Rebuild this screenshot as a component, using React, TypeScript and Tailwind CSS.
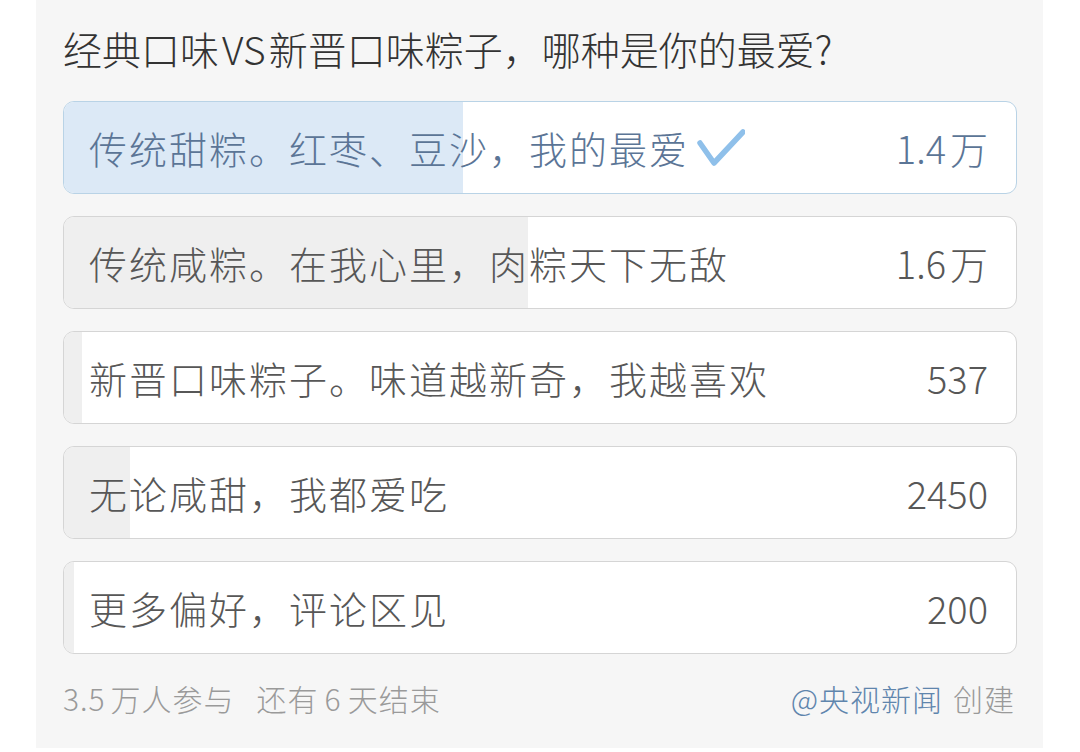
import React from 'react';

interface PollOption {
    label: string;
    count: string;
    share: number;
    picked?: boolean;
}

const options: PollOption[] = [
    { label: '传统甜粽。红枣、豆沙，我的最爱', count: '1.4万', share: 41.9, picked: true },
    { label: '传统咸粽。在我心里，肉粽天下无敌', count: '1.6万', share: 48.7 },
    { label: '新晋口味粽子。味道越新奇，我越喜欢', count: '537', share: 1.9 },
    { label: '无论咸甜，我都爱吃', count: '2450', share: 6.9 },
    { label: '更多偏好，评论区见', count: '200', share: 1.0 },
];

const font = { fontFamily: '"Noto Sans CJK SC", "Noto Sans", sans-serif' };

function CheckMark() {
    return (
        <svg className="ml-[8px] w-[48px] h-[38px] shrink-0" viewBox="0 0 48 38" fill="none">
            <path
                d="M3 14 L17 34 L46 3"
                stroke="#8fc0ea"
                strokeWidth="5.5"
                strokeLinecap="round"
                strokeLinejoin="round"
            />
        </svg>
    );
}

function OptionRow({ option }: { option: PollOption }) {
    const picked = !!option.picked;
    return (
        <div
            className={
                picked
                    ? 'relative h-[93px] rounded-[11px] border border-[#b9d3e6] bg-white overflow-hidden'
                    : 'relative h-[93px] rounded-[11px] border border-[#d5d5d5] bg-white overflow-hidden'
            }
        >
            <div
                className={picked ? 'absolute inset-y-0 left-0 bg-[#dce9f6]' : 'absolute inset-y-0 left-0 bg-[#efefef]'}
                style={{ width: `${option.share}%` }}
            />
            <div
                className={
                    picked
                        ? 'relative h-full flex items-center pl-[25px] pr-[28px] text-[#5b7596]'
                        : 'relative h-full flex items-center pl-[25px] pr-[28px] text-[#575757]'
                }
            >
                <span className="text-[38px] leading-none font-light tracking-[2px] whitespace-nowrap">
                    {option.label}
                </span>
                {picked && <CheckMark />}
                <span className="ml-auto text-[38px] leading-none font-light whitespace-nowrap">
                    {option.count.endsWith('万') ? (
                        <>
                            {option.count.slice(0, -1)}
                            <span className="ml-[4px]">万</span>
                        </>
                    ) : (
                        option.count
                    )}
                </span>
            </div>
        </div>
    );
}

export default function App() {
    return (
        <div className="w-[1080px] h-[752px] bg-white" style={font}>
            <div className="ml-[36px] w-[1007px] bg-[#f6f6f6] pl-[27px] pr-[26px] pt-[24px] pb-[30px]">
                <h1 className="text-[39px] leading-[48px] font-light text-[#333333] whitespace-nowrap">
                    经典口味<span className="mx-[3px]">VS</span>新晋口味粽子，哪种是你的最爱?
                </h1>
                <div className="mt-[29px] flex flex-col gap-[22px]">
                    {options.map((option) => (
                        <OptionRow key={option.label} option={option} />
                    ))}
                </div>
                <div className="mt-[24px] h-[40px] flex items-center text-[30px] leading-none font-light tracking-[1px] text-[#9a9a9a] whitespace-nowrap">
                    <span>
                        3.5<span className="ml-[5px]">万人参与</span>
                    </span>
                    <span className="ml-[22px]">
                        还有<span className="mx-[6px]">6</span>天结束
                    </span>
                    <span className="ml-auto text-[#5f85ad]">@央视新闻</span>
                    <span className="ml-[10px] mr-[2px]">创建</span>
                </div>
            </div>
        </div>
    );
}
